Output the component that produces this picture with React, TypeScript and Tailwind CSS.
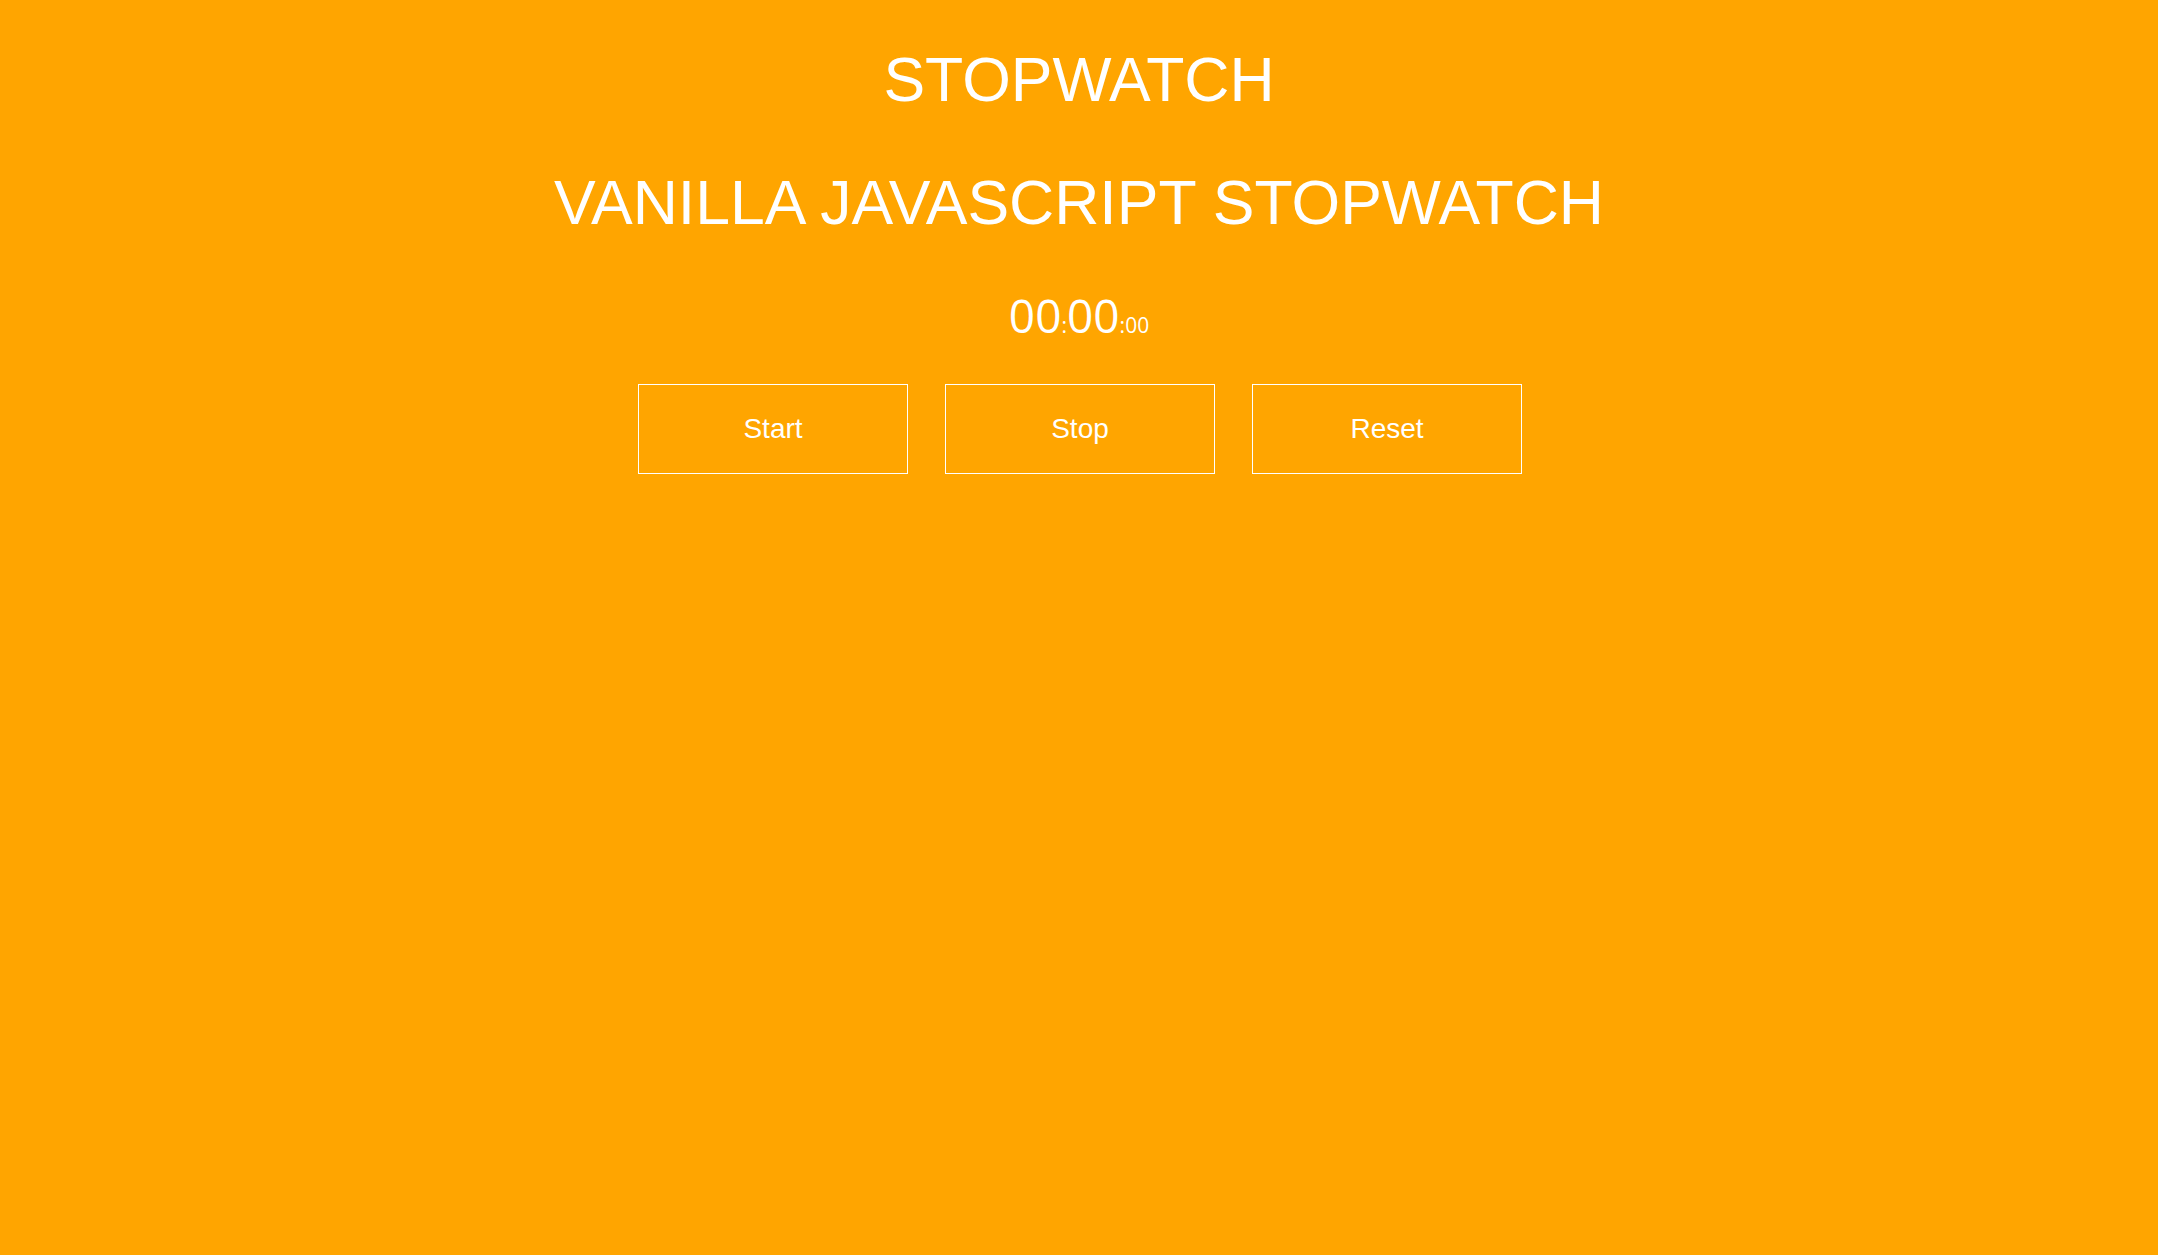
export default function App() {
  return (
    <div className="min-h-[1255px] w-full bg-[#ffa500] text-white font-['Liberation_Sans',Arial,sans-serif]">
      <div className="flex flex-col items-center pt-[44px]">
        <h1 className="text-[62.5px] leading-[71px] font-normal">STOPWATCH</h1>
        <h2 className="mt-[52px] text-[62.5px] leading-[71px] font-normal">VANILLA JAVASCRIPT STOPWATCH</h2>

        <div className="mt-[54px] flex h-[46px] items-baseline font-['Open_Sans',sans-serif] leading-[46px]">
          <span className="text-[46px]">00</span>
          <span className="text-[21px]">:</span>
          <span className="text-[46px]">00</span>
          <span className="text-[21px]">:</span>
          <span className="text-[21px]">00</span>
        </div>

        <div className="mt-[46px] flex gap-[37px] pl-[2px]">
          {["Start", "Stop", "Reset"].map((label) => (
            <button
              key={label}
              type="button"
              className="h-[90px] w-[270px] border border-white bg-transparent text-[28px] text-white"
            >
              {label}
            </button>
          ))}
        </div>
      </div>
    </div>
  );
}
